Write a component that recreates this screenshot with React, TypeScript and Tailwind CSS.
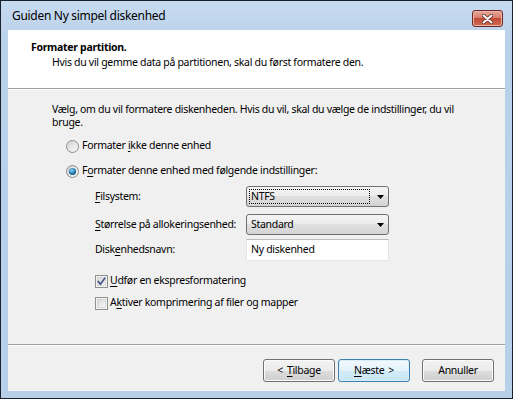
import { ReactNode } from "react"

const Mn = ({ children }: { children: ReactNode }) => (
  <span className="underline underline-offset-[2px] decoration-[1px]">{children}</span>
)

function Radio({ id, checked }: { id: string; checked?: boolean }) {
  return (
    <svg width="13" height="13" viewBox="0 0 13 13" className="shrink-0">
      <defs>
        <linearGradient id={`${id}-f`} x1="0" y1="0" x2="1" y2="1">
          <stop offset="0" stopColor="#d2d2d2" />
          <stop offset="1" stopColor="#fbfbfb" />
        </linearGradient>
        <radialGradient id={`${id}-d`} cx="0.4" cy="0.35" r="0.7">
          <stop offset="0" stopColor="#8fd6f6" />
          <stop offset="0.55" stopColor="#2b86b9" />
          <stop offset="1" stopColor="#124a72" />
        </radialGradient>
      </defs>
      <circle cx="6.5" cy="6.5" r="6" fill={`url(#${id}-f)`} stroke="#8b8c8c" />
      {checked && <circle cx="6.5" cy="6.5" r="3.6" fill={`url(#${id}-d)`} />}
    </svg>
  )
}

function Check({ id, checked }: { id: string; checked?: boolean }) {
  return (
    <svg width="13" height="13" viewBox="0 0 13 13" className="shrink-0">
      <defs>
        <linearGradient id={`${id}-f`} x1="0" y1="0" x2="1" y2="1">
          <stop offset="0" stopColor="#d6d6d6" />
          <stop offset="1" stopColor="#fafafa" />
        </linearGradient>
      </defs>
      <rect x="0.5" y="0.5" width="12" height="12" fill="#f4f4f4" stroke="#8e8f8f" />
      <rect x="2.5" y="2.5" width="8" height="8" fill={`url(#${id}-f)`} stroke="#c8c8c8" strokeWidth="0.6" />
      {checked && (
        <path d="M3.2 6.4 L5.4 9.2 L9.8 3.2" fill="none" stroke="#4a5f8f" strokeWidth="1.8" strokeLinecap="round" strokeLinejoin="round" />
      )}
    </svg>
  )
}

function Arrow() {
  return (
    <svg width="7" height="4" viewBox="0 0 7 4">
      <path d="M0 0 H7 L3.5 4 Z" fill="#000" />
    </svg>
  )
}

function Combo({ value, focused }: { value: string; focused?: boolean }) {
  return (
    <div className="w-[143px] h-[21px] rounded-[3px] border border-[#707070] bg-[linear-gradient(#f4f4f4,#ececec_50%,#e0e0e0_50%,#d4d4d4)] flex items-stretch">
      <div className="flex-1 p-[2px] flex">
        <span
          className={`flex-1 flex items-center pl-[1px] ${focused ? "border border-dotted border-black" : "border border-transparent"}`}
        >
          {value}
        </span>
      </div>
      <div className="w-[16px] flex items-center justify-center">
        <Arrow />
      </div>
    </div>
  )
}

function Button({ children, primary }: { children: ReactNode; primary?: boolean }) {
  return (
    <button
      className={`w-[72px] h-[23px] rounded-[3px] border flex items-center justify-center whitespace-pre ${
        primary
          ? "border-[#3c7fb1] bg-[linear-gradient(#f3f9fd,#e4f2fb_50%,#d3ebf8_50%,#c9e6f7)] shadow-[inset_0_0_0_1px_#d8effb]"
          : "border-[#707070] bg-[linear-gradient(#f2f2f2,#ebebeb_50%,#dddddd_50%,#cfcfcf)] shadow-[inset_0_0_0_1px_#fcfcfc]"
      }`}
    >
      {children}
    </button>
  )
}

export default function App() {
  return (
    <div className="w-[513px] h-[399px] bg-[#18222e] p-px font-['Noto_Sans',sans-serif] text-black">
      <div className="h-full flex flex-col bg-[linear-gradient(#c7dbf0,#bad1ea_40px,#b7cfe9)]">
        {/* Title bar */}
        <div className="h-[29px] flex items-start justify-between pl-[11px] pr-[9px]">
          <span className="text-[12px] leading-[29px] tracking-[-0.3px]">Guiden Ny simpel diskenhed</span>
          <div className="mt-[9px] w-[31px] h-[17px] rounded-[3px] border border-[#6e2a22] bg-[linear-gradient(#e8a999,#d47a68_50%,#c24a36_50%,#cf6d55)] shadow-[inset_0_0_0_1px_#eab2a6] flex items-center justify-center">
            <svg width="11" height="10" viewBox="0 0 11 10">
              <path d="M1.5 1.5 L9.5 8.5 M9.5 1.5 L1.5 8.5" stroke="#5a2a24" strokeWidth="3.6" strokeLinecap="round" />
              <path d="M1.5 1.5 L9.5 8.5 M9.5 1.5 L1.5 8.5" stroke="#ffffff" strokeWidth="2" strokeLinecap="round" />
            </svg>
          </div>
        </div>

        {/* Client area */}
        <div className="flex-1 mx-[7px] mb-[7px] bg-[#f0f0f0] flex flex-col text-[10.5px] tracking-[-0.3px]">
          <div className="h-[59px] bg-white border-b border-[#a0a0a0] pl-[23px] pt-[10px] leading-[15px]">
            <div className="font-bold">Formater partition.</div>
            <div className="pl-[21px]">Hvis du vil gemme data på partitionen, skal du først formatere den.</div>
          </div>

          <div className="flex-1 border-t border-white pl-[44px] pt-[13px] whitespace-nowrap">
            <p className="leading-[13px]">
              Vælg, om du vil formatere diskenheden. Hvis du vil, skal du vælge de indstillinger, du vil
              <br />
              bruge.
            </p>

            <div className="mt-[9px] ml-[14px] h-[16px] flex items-center gap-[3px]">
              <Radio id="r1" />
              <span>
                Formater <Mn>i</Mn>kke denne enhed
              </span>
            </div>
            <div className="mt-[9px] ml-[14px] h-[16px] flex items-center gap-[3px]">
              <Radio id="r2" checked />
              <span>
                F<Mn>o</Mn>rmater denne enhed med følgende indstillinger:
              </span>
            </div>

            <div className="ml-[43px]">
              <div className="mt-[7px] flex items-center">
                <span className="w-[151px]">
                  <Mn>F</Mn>ilsystem:
                </span>
                <Combo value="NTFS" focused />
              </div>
              <div className="mt-[7px] flex items-center">
                <span className="w-[151px]">
                  <Mn>S</Mn>tørrelse på allokeringsenhed:
                </span>
                <Combo value="Standard" />
              </div>
              <div className="mt-[4px] flex items-center">
                <span className="w-[151px]">
                  Disk<Mn>e</Mn>nhedsnavn:
                </span>
                <div className="w-[143px] h-[22px] bg-white border border-[#e2e6ea] border-t-[#b9bcc0] flex items-center pl-[4px]">
                  Ny diskenhed
                </div>
              </div>

              <div className="mt-[12px] h-[16px] flex items-center gap-[2px]">
                <Check id="c1" checked />
                <span>
                  <Mn>U</Mn>dfør en ekspresformatering
                </span>
              </div>
              <div className="mt-[6px] h-[16px] flex items-center gap-[2px]">
                <Check id="c2" />
                <span>
                  A<Mn>k</Mn>tiver komprimering af filer og mapper
                </span>
              </div>
            </div>
          </div>

          <div className="h-[47px] border-t border-[#a0a0a0] shadow-[inset_0_1px_0_#ffffff] pt-[14px] pr-[11px] flex justify-end items-start">
            <Button>
              <span className="mr-[4px]">&lt;</span>
              <Mn>T</Mn>ilbage
            </Button>
            <div className="w-[3px]" />
            <Button primary>
              <Mn>N</Mn>æste
              <span className="ml-[4px]">&gt;</span>
            </Button>
            <div className="w-[12px]" />
            <Button>Annuller</Button>
          </div>
        </div>
      </div>
    </div>
  )
}
